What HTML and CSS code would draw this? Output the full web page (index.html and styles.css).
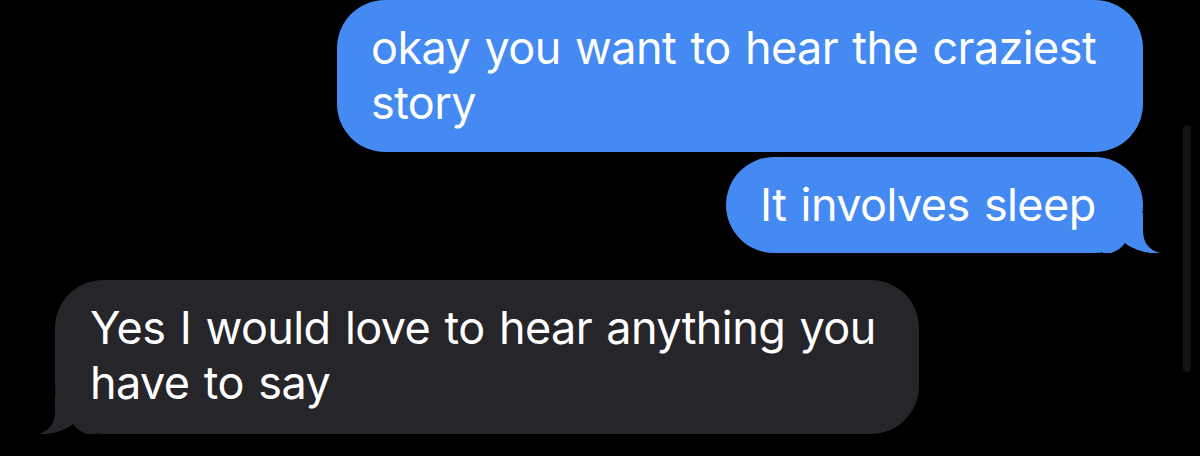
FILE: index.html
```html
<!DOCTYPE html>
<html>
<head>
<meta charset="utf-8">
<link rel="stylesheet" href="styles.css">
</head>
<body>
<div class="screen">
  <div class="thread">
    <div class="bubble sent b1">okay you want to hear the craziest story</div>
    <div class="bubble sent b2">It involves sleep
      <svg class="tail tail-right" width="58" height="40" viewBox="0 0 58 40"><path d="M0 0 H40 V17 C40 30 46 37 57 40 C46 41 32 38 22 30 C18 35 14 38 8 40 H0 Z"/></svg>
    </div>
    <div class="bubble recv b3">Yes I would love to hear anything you have to say
      <svg class="tail tail-left" width="58" height="40" viewBox="0 0 58 40"><path d="M58 0 H18 V17 C18 30 12 37 1 40 C12 41 26 38 36 30 C40 35 44 38 50 40 H58 Z"/></svg>
    </div>
  </div>
  <div class="scroll-indicator"></div>
</div>
</body>
</html>
```
FILE: styles.css
```css
html, body {
  margin: 0;
  padding: 0;
  background: #000;
}
.screen {
  position: relative;
  width: 1200px;
  height: 456px;
  overflow: hidden;
  background: #000;
}
.thread {
  display: flex;
  flex-direction: column;
  padding: 0 57px 0 55px;
}
.bubble {
  position: relative;
  z-index: 0;
  box-sizing: border-box;
  font-family: Inter, "Open Sans", sans-serif;
  font-size: 45px;
  line-height: 55px;
  letter-spacing: -0.6px;
  word-spacing: 2.3px;
  color: #fff;
  border-radius: 48px;
  padding: 20px 30px 21px 34px;
}
.sent {
  align-self: flex-end;
  background: #448af2;
}
.recv {
  align-self: flex-start;
  background: #262529;
}
.b1 {
  width: 806px;
  padding-left: 34px;
  height: 152px;
}
.b2 {
  width: 417px;
  margin-top: 5px;
  height: 96px;
  padding-top: 20px;
}
.b3 {
  width: 864px;
  margin-top: 27px;
  height: 154px;
  padding-left: 35px;
}
.tail {
  position: absolute;
  bottom: 0;
  z-index: -1;
}
.tail-right {
  right: -18px;
  fill: #448af2;
}
.tail-left {
  left: -18px;
  fill: #262529;
}
.scroll-indicator {
  position: absolute;
  left: 1183px;
  top: 125px;
  width: 8px;
  height: 247px;
  border-radius: 4px;
  background: #151515;
}
```
